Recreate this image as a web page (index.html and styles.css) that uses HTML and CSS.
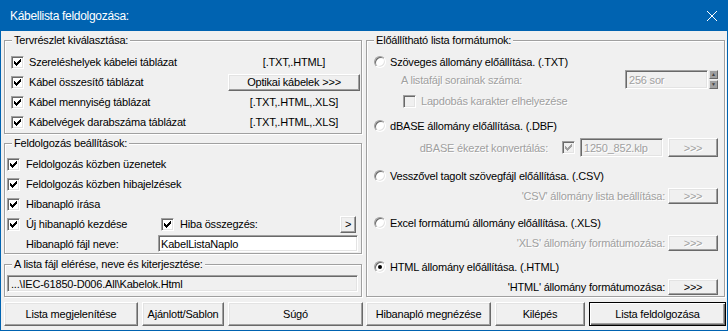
FILE: index.html
```html
<!DOCTYPE html>
<html>
<head>
	<meta charset="utf-8">
	<title>Kábellista feldolgozása</title>
	<link rel="stylesheet" href="styles.css">
</head>
<body>
<div class="window">
	<div class="titlebar">
		<span class="caption">Kábellista feldolgozása:</span>
		<svg class="close" width="10" height="10" viewBox="0 0 10 10"><path d="M0 0L10 10M10 0L0 10" stroke="#fff" stroke-width="1"/></svg>
	</div>
	<div class="client">
		<div class="left-col">
			<fieldset class="group parts">
				<legend>Tervrészlet kiválasztása:</legend>
				<div class="part-row">
					<label class="check"><span class="box"><svg width="7" height="7" viewBox="0 0 7 7"><path d="M0 2h1v3H0zM1 3h1v3H1zM2 4h1v3H2zM3 3h1v3H3zM4 2h1v3H4zM5 1h1v3H5zM6 0h1v3H6z"/></svg></span>Szereléshelyek kábelei táblázat</label>
					<span class="fmt">[.TXT,.HTML]</span>
				</div>
				<div class="part-row">
					<label class="check"><span class="box"><svg width="7" height="7" viewBox="0 0 7 7"><path d="M0 2h1v3H0zM1 3h1v3H1zM2 4h1v3H2zM3 3h1v3H3zM4 2h1v3H4zM5 1h1v3H5zM6 0h1v3H6z"/></svg></span>Kábel összesítő táblázat</label>
					<button class="btn optical">Optikai kábelek &gt;&gt;&gt;</button>
				</div>
				<div class="part-row">
					<label class="check"><span class="box"><svg width="7" height="7" viewBox="0 0 7 7"><path d="M0 2h1v3H0zM1 3h1v3H1zM2 4h1v3H2zM3 3h1v3H3zM4 2h1v3H4zM5 1h1v3H5zM6 0h1v3H6z"/></svg></span>Kábel mennyiség táblázat</label>
					<span class="fmt">[.TXT,.HTML,.XLS]</span>
				</div>
				<div class="part-row">
					<label class="check"><span class="box"><svg width="7" height="7" viewBox="0 0 7 7"><path d="M0 2h1v3H0zM1 3h1v3H1zM2 4h1v3H2zM3 3h1v3H3zM4 2h1v3H4zM5 1h1v3H5zM6 0h1v3H6z"/></svg></span>Kábelvégek darabszáma táblázat</label>
					<span class="fmt">[.TXT,.HTML,.XLS]</span>
				</div>
			</fieldset>

			<fieldset class="group settings">
				<legend>Feldolgozás beállítások:</legend>
				<div class="set-row">
					<label class="check"><span class="box"><svg width="7" height="7" viewBox="0 0 7 7"><path d="M0 2h1v3H0zM1 3h1v3H1zM2 4h1v3H2zM3 3h1v3H3zM4 2h1v3H4zM5 1h1v3H5zM6 0h1v3H6z"/></svg></span>Feldolgozás közben üzenetek</label>
				</div>
				<div class="set-row">
					<label class="check"><span class="box"><svg width="7" height="7" viewBox="0 0 7 7"><path d="M0 2h1v3H0zM1 3h1v3H1zM2 4h1v3H2zM3 3h1v3H3zM4 2h1v3H4zM5 1h1v3H5zM6 0h1v3H6z"/></svg></span>Feldolgozás közben hibajelzések</label>
				</div>
				<div class="set-row">
					<label class="check"><span class="box"><svg width="7" height="7" viewBox="0 0 7 7"><path d="M0 2h1v3H0zM1 3h1v3H1zM2 4h1v3H2zM3 3h1v3H3zM4 2h1v3H4zM5 1h1v3H5zM6 0h1v3H6z"/></svg></span>Hibanapló írása</label>
				</div>
				<div class="set-row split">
					<label class="check"><span class="box"><svg width="7" height="7" viewBox="0 0 7 7"><path d="M0 2h1v3H0zM1 3h1v3H1zM2 4h1v3H2zM3 3h1v3H3zM4 2h1v3H4zM5 1h1v3H5zM6 0h1v3H6z"/></svg></span>Új hibanapló kezdése</label>
					<label class="check summary"><span class="box"><svg width="7" height="7" viewBox="0 0 7 7"><path d="M0 2h1v3H0zM1 3h1v3H1zM2 4h1v3H2zM3 3h1v3H3zM4 2h1v3H4zM5 1h1v3H5zM6 0h1v3H6z"/></svg></span>Hiba összegzés:</label>
					<button class="btn more">&gt;</button>
				</div>
				<div class="set-row split last">
					<span class="log-label">Hibanapló fájl neve:</span>
					<span class="field log-name">KabelListaNaplo</span>
				</div>
			</fieldset>

			<fieldset class="group path">
				<legend>A lista fájl elérése, neve és kiterjesztése:</legend>
				<div class="field readonly">...\IEC-61850-D006.All\Kabelok.Html</div>
			</fieldset>
		</div>

		<fieldset class="group formats">
			<legend>Előállítható lista formátumok:</legend>

			<div class="opt first"><span class="radio"></span>Szöveges állomány előállítása. (.TXT)</div>
			<div class="sub spin-row">
				<span class="dim">A listafájl sorainak száma:</span>
				<span class="field disabled rows">256 sor</span>
				<span class="spin"><span class="spin-btn">&#9650;</span><span class="spin-btn">&#9660;</span></span>
			</div>
			<div class="sub page-row">
				<label class="check dim"><span class="box off"></span>Lapdobás karakter elhelyezése</label>
			</div>

			<div class="opt dbf"><span class="radio"></span>dBASE állomány előállítása. (.DBF)</div>
			<div class="sub dbf-row">
				<span class="dim">dBASE ékezet konvertálás:</span>
				<span class="box off"><svg width="7" height="7" viewBox="0 0 7 7"><path fill="#a0a0a0" d="M0 2h1v3H0zM1 3h1v3H1zM2 4h1v3H2zM3 3h1v3H3zM4 2h1v3H4zM5 1h1v3H5zM6 0h1v3H6z"/></svg></span>
				<span class="field disabled klp">1250_852.klp</span>
				<button class="btn arrow disabled">&gt;&gt;&gt;</button>
			</div>

			<div class="opt spaced"><span class="radio"></span>Vesszővel tagolt szövegfájl előállítása. (.CSV)</div>
			<div class="sub set">
				<span class="dim">'CSV' állomány lista beállítása:</span>
				<button class="btn arrow disabled">&gt;&gt;&gt;</button>
			</div>

			<div class="opt spaced"><span class="radio"></span>Excel formátumú állomány előállítása. (.XLS)</div>
			<div class="sub set">
				<span class="dim">'XLS' állomány formátumozása:</span>
				<button class="btn arrow disabled">&gt;&gt;&gt;</button>
			</div>

			<div class="opt html"><span class="radio on"></span>HTML állomány előállítása. (.HTML)</div>
			<div class="sub set">
				<span>'HTML' állomány formátumozása:</span>
				<button class="btn arrow">&gt;&gt;&gt;</button>
			</div>
		</fieldset>

		<div class="buttons left-buttons">
			<button class="btn">Lista megjelenítése</button>
			<button class="btn">Ajánlott/Sablon</button>
			<button class="btn">Súgó</button>
		</div>
		<div class="buttons right-buttons">
			<button class="btn">Hibanapló megnézése</button>
			<button class="btn">Kilépés</button>
			<button class="btn default">Lista feldolgozása</button>
		</div>
	</div>
</div>
</body>
</html>
```

FILE: styles.css
```css
html, body {
	margin: 0;
	padding: 0;
}

body {
	background-color: #f0f0f0;
	font-family: "Liberation Sans", Arial, sans-serif;
	font-size: 11px;
	letter-spacing: -0.2px;
	color: #000;
}

.window {
	width: 728px;
	height: 331px;
	box-sizing: border-box;
	border: 1px solid #0063b1;
	border-top: 0;
	display: flex;
	flex-direction: column;
}

/* title bar */
.titlebar {
	height: 31px;
	flex: none;
	background-color: #0063b1;
	color: #fff;
	display: flex;
	align-items: center;
	padding: 0 10px 0 9px;
}

.caption {
	flex: 1;
	font-size: 12px;
	letter-spacing: -0.3px;
	padding-top: 1px;
}

.close {
	display: block;
	margin-top: 1px;
}

/* client area */
.client {
	flex: 1;
	display: grid;
	grid-template-columns: 359px 360px;
	grid-template-rows: 264px 24px;
	column-gap: 3px;
	row-gap: 4px;
	padding: 3px 1px 4px 3px;
}

.left-col {
	display: flex;
	flex-direction: column;
	min-height: 0;
}

/* etched group box */
.group {
	margin: 0 1px 1px 0;
	padding: 0;
	min-width: 0;
	border: 1px solid #a0a0a0;
	box-shadow: 1px 1px 0 #fff, inset 1px 1px 0 #fff;
}

.group legend {
	margin-left: 7px;
	padding: 0 2px;
	line-height: 13px;
	background-color: #f0f0f0;
}

.parts {
	padding: 5px 0 1px 0;
}

.settings {
	margin-top: 2px;
	padding: 4px 0 0 0;
}

.path {
	margin-top: 3px;
	padding: 4px 0 0 0;
	flex: 1;
}

.formats {
	padding: 6px 0 0 0;
}

/* checkbox */
.check {
	display: flex;
	align-items: center;
	white-space: nowrap;
}

.box {
	width: 13px;
	height: 13px;
	box-sizing: border-box;
	flex: none;
	display: inline-flex;
	align-items: center;
	justify-content: center;
	background-color: #fff;
	border: 1px solid;
	border-color: #a0a0a0 #fff #fff #a0a0a0;
	box-shadow: inset 1px 1px 0 #696969, inset -1px -1px 0 #e3e3e3;
	margin-right: 5px;
}

.box svg {
	display: block;
	shape-rendering: crispEdges;
}

.box.off {
	background-color: #f0f0f0;
}

/* radio */
.radio {
	width: 12px;
	height: 12px;
	box-sizing: border-box;
	flex: none;
	position: relative;
	border-radius: 50%;
	background-color: #fff;
	border: 1px solid;
	border-color: #a0a0a0 #fff #fff #a0a0a0;
	box-shadow: inset 1px 1px 0 #696969, inset -1px -1px 0 #e3e3e3;
	margin-right: 4px;
}

.radio.on::after {
	content: "";
	position: absolute;
	left: 3px;
	top: 3px;
	width: 4px;
	height: 4px;
	border-radius: 50%;
	background-color: #000;
}

/* buttons */
.btn {
	font: inherit;
	letter-spacing: inherit;
	color: #000;
	background-color: #f0f0f0;
	margin: 0;
	padding: 0;
	box-sizing: border-box;
	border: 1px solid;
	border-color: #fff #696969 #696969 #fff;
	box-shadow: inset -1px -1px 0 #a0a0a0, inset 1px 1px 0 #e3e3e3;
	white-space: nowrap;
}

.btn.default {
	border-color: #000;
	box-shadow: inset 1px 1px 0 #fff, inset -1px -1px 0 #696969, inset -2px -2px 0 #a0a0a0;
}

.btn.disabled {
	color: #a0a0a0;
	text-shadow: 1px 1px 0 #fff;
}

/* text fields */
.field {
	box-sizing: border-box;
	height: 17px;
	display: flex;
	align-items: center;
	padding: 0 2px 0 3px;
	background-color: #fff;
	border: 1px solid;
	border-color: #a0a0a0 #fff #fff #a0a0a0;
	box-shadow: inset 1px 1px 0 #696969, inset -1px -1px 0 #e3e3e3;
	white-space: nowrap;
	overflow: hidden;
}

.field.readonly,
.field.disabled {
	background-color: #f0f0f0;
}

.field.disabled {
	color: #a0a0a0;
	text-shadow: 1px 1px 0 #fff;
}

.dim {
	color: #a0a0a0;
	text-shadow: 1px 1px 0 #fff;
}

/* group 1 */
.part-row {
	display: grid;
	grid-template-columns: 1fr 132px;
	align-items: center;
	height: 20px;
	margin: 0 1px 0 6px;
}

.fmt {
	text-align: center;
}

.optical {
	height: 17px;
}

/* group 2 */
.set-row {
	display: flex;
	align-items: center;
	height: 20px;
	margin: 0 3px 0 2px;
}

.set-row .box {
	margin-right: 6px;
}

.set-row.split {
	display: grid;
	grid-template-columns: 151px 1fr 16px;
}

.set-row.last {
	height: 19px;
	grid-template-columns: 151px 1fr;
}

.summary {
	padding-left: 3px;
}

.more {
	height: 17px;
	width: 16px;
	margin-left: -2px;
}

.log-label {
	padding-left: 19px;
}

.log-name {
	padding-left: 2px;
}

/* group 3 */
.path .field {
	margin: 0 3px 0 2px;
}

/* formats group */
.opt {
	display: flex;
	align-items: center;
	height: 17px;
	margin: 0 6px 0 7px;
	white-space: nowrap;
}

.opt.dbf {
	height: 18px;
	margin-top: 7px;
}

.opt.spaced {
	height: 18px;
	margin-top: 10px;
}

.opt.html {
	height: 18px;
	margin-top: 7px;
}

.sub {
	display: flex;
	align-items: center;
	margin: 0 6px 0 7px;
	white-space: nowrap;
}

.spin-row {
	height: 19px;
	padding-left: 27px;
}

.rows {
	width: 83px;
	height: 19px;
	margin-left: auto;
}

.spin {
	display: flex;
	flex-direction: column;
	gap: 1px;
	margin-left: 1px;
}

.spin-btn {
	width: 9px;
	height: 9px;
	box-sizing: border-box;
	background-color: #a0a0a0;
	border: 1px solid;
	border-color: #e3e3e3 #696969 #696969 #e3e3e3;
	color: #404040;
	font-size: 5px;
	line-height: 7px;
	text-align: center;
	letter-spacing: 0;
}

.page-row {
	height: 18px;
	margin-top: 3px;
	padding-left: 29px;
}

.dbf-row {
	height: 19px;
	margin-top: 3px;
	justify-content: flex-end;
}

.dbf-row .dim {
	margin-right: 14px;
}

.dbf-row .box {
	margin-right: 5px;
}

.klp {
	width: 83px;
	height: 19px;
	margin-right: 5px;
}

.arrow {
	width: 50px;
	height: 16px;
}

.dbf-row .arrow {
	height: 19px;
}

.set {
	height: 16px;
	margin-top: 3px;
	justify-content: flex-end;
}

.set .arrow {
	margin-left: 3px;
}

/* bottom buttons */
.buttons {
	display: grid;
	column-gap: 4px;
}

.left-buttons {
	grid-template-columns: 134px 82px 1fr;
}

.right-buttons {
	grid-template-columns: 125px 90px 1fr;
}
```
